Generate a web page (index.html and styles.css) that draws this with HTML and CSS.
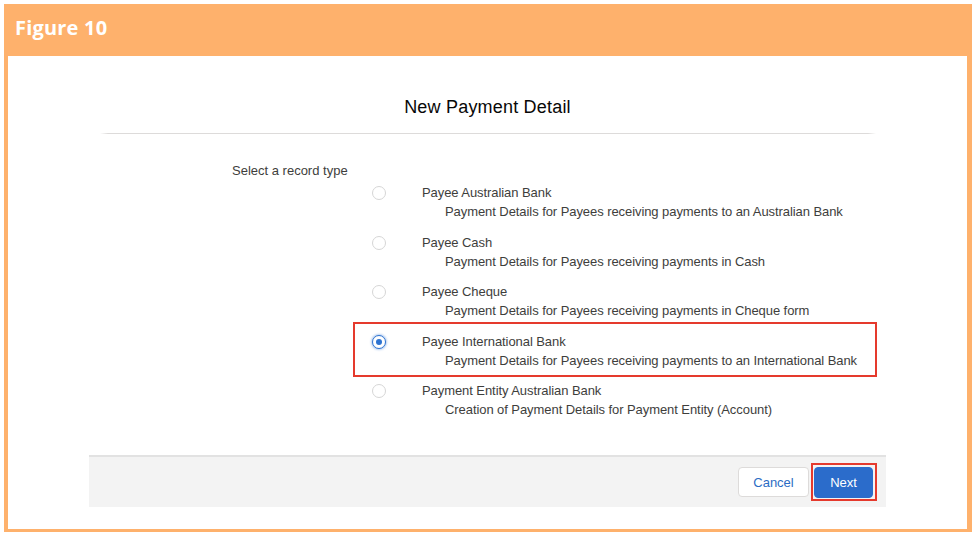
FILE: index.html
```html
<!DOCTYPE html>
<html>
<head>
<meta charset="utf-8">
<link rel="stylesheet" href="styles.css">
</head>
<body>
<div class="frame">
  <div class="header">Figure 10</div>
  <div class="panel">
    <h1 class="title">New Payment Detail</h1>
    <div class="divider"></div>
    <div class="form">
      <div class="legend">Select a record type</div>
      <div class="options">
        <div class="option">
          <span class="radio"></span>
          <div class="text">
            <div class="name">Payee Australian Bank</div>
            <div class="desc">Payment Details for Payees receiving payments to an Australian Bank</div>
          </div>
        </div>
        <div class="option">
          <span class="radio"></span>
          <div class="text">
            <div class="name">Payee Cash</div>
            <div class="desc">Payment Details for Payees receiving payments in Cash</div>
          </div>
        </div>
        <div class="option">
          <span class="radio"></span>
          <div class="text">
            <div class="name">Payee Cheque</div>
            <div class="desc">Payment Details for Payees receiving payments in Cheque form</div>
          </div>
        </div>
        <div class="option selected">
          <span class="radio checked"></span>
          <div class="text">
            <div class="name">Payee International Bank</div>
            <div class="desc">Payment Details for Payees receiving payments to an International Bank</div>
          </div>
          <span class="highlight option-highlight"></span>
        </div>
        <div class="option">
          <span class="radio"></span>
          <div class="text">
            <div class="name">Payment Entity Australian Bank</div>
            <div class="desc">Creation of Payment Details for Payment Entity (Account)</div>
          </div>
        </div>
      </div>
    </div>
    <div class="footer">
      <button class="btn btn-neutral">Cancel</button>
      <div class="next-wrap">
        <button class="btn btn-brand">Next</button>
        <span class="highlight next-highlight"></span>
      </div>
    </div>
  </div>
</div>
</body>
</html>
```

FILE: styles.css
```css
* { box-sizing: border-box; }
html, body { margin: 0; padding: 0; background: #ffffff; }
body {
  width: 976px;
  height: 536px;
  overflow: hidden;
  font-family: "Liberation Sans", Arial, sans-serif;
}
.frame {
  margin: 4px 0 0 4px;
  width: 968px;
  height: 528px;
  background: #feb16c;
  display: flex;
  flex-direction: column;
}
.header {
  height: 52px;
  padding-left: 11px;
  padding-top: 12px;
  color: #ffffff;
  font-family: "Open Sans", "Lato", sans-serif;
  font-weight: 700;
  font-size: 20px;
  line-height: 24px;
  letter-spacing: 0.2px;
}
.panel {
  margin: 0 5px 3px 4px;
  flex: 1;
  background: #ffffff;
  display: flex;
  flex-direction: column;
}
.title {
  margin: 39px 0 0;
  text-align: center;
  font-size: 18px;
  line-height: 24px;
  font-weight: 400;
  letter-spacing: 0.2px;
  color: #080707;
}
.divider {
  margin: 14px 91px 0 92px;
  height: 1px;
  background: linear-gradient(to right, rgba(221,219,218,0) 0, #dddbda 8px, #dddbda calc(100% - 8px), rgba(221,219,218,0) 100%);
}
.form {
  margin-top: 28px;
  padding-left: 224px;
  color: #3e3e3c;
  font-size: 13px;
  line-height: 18px;
}
.legend { height: 18px; }
.options {
  margin-top: 4px;
  margin-left: 140px;
}
.option {
  position: relative;
  display: flex;
  align-items: flex-start;
  height: 49.5px;
}
.radio {
  width: 14px;
  height: 14px;
  margin-top: 2px;
  border-radius: 50%;
  border: 1px solid #d6d6d6;
  background: #ffffff;
  flex: none;
}
.radio.checked {
  border: 1.5px solid #2d73d1;
  box-shadow: 0 0 2px 1px rgba(45,115,209,0.35);
  display: flex;
  align-items: center;
  justify-content: center;
}
.radio.checked::after {
  content: "";
  width: 6px;
  height: 6px;
  border-radius: 50%;
  background: #2d73d1;
}
.text { margin-left: 36px; letter-spacing: -0.07px; }
.name { color: #3e3e3c; }
.desc { padding-left: 23px; margin-top: 1px; color: #3e3e3c; }
.highlight {
  position: absolute;
  border: 2px solid #e53a2d;
  pointer-events: none;
}
.option-highlight {
  left: -19px;
  top: -11px;
  width: 524px;
  height: 55px;
}
.footer {
  margin: auto 0 22px 81px;
  width: 797px;
  height: 52px;
  background: #f3f3f3;
  border-top: 2px solid #e2e2e2;
  display: flex;
  justify-content: flex-end;
  align-items: center;
  padding-right: 13px;
  gap: 5px;
}
.btn {
  font-family: "Liberation Sans", Arial, sans-serif;
  font-size: 13px;
  height: 31px;
  border-radius: 4px;
  cursor: pointer;
}
.btn-neutral {
  width: 71px;
  height: 30px;
  background: #ffffff;
  border: 1px solid #dddbda;
  color: #2b6cc4;
}
.next-wrap {
  position: relative;
  display: flex;
}
.btn-brand {
  width: 59px;
  background: #2b6ccb;
  border: 1px solid #2b6ccb;
  color: #ffffff;
}
.next-highlight {
  left: -3px;
  top: -4px;
  right: -4px;
  bottom: -3px;
}
```
